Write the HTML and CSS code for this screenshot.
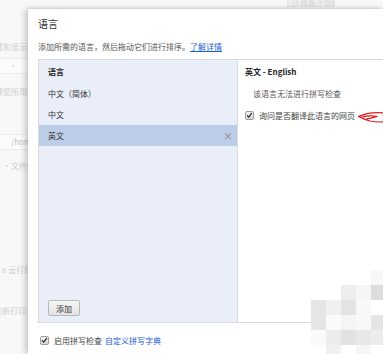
FILE: index.html
```html
<!DOCTYPE html>
<html lang="zh-CN">
<head>
<meta charset="utf-8">
<title>语言</title>
<link rel="stylesheet" href="styles.css">
</head>
<body>
<div class="page">
  <div class="topbar"><span class="ghost-btn">让我基于您的</span></div>
  <div class="main">
    <aside class="bg-col">
      <div class="bg-text t1">置和显示</div>
      <div class="bg-input i1">·</div>
      <div class="bg-text t2">择您所用</div>
      <div class="bg-input i2">/hom</div>
      <div class="bg-text t3">·文件的</div>
      <div class="bg-text t4">e 云打印</div>
      <div class="bg-text t5">|新打印</div>
    </aside>
    <section class="dialog">
      <h1 class="title">语言</h1>
      <p class="subtitle">添加所需的语言，然后拖动它们进行排序。<a class="link underline" href="#">了解详情</a></p>
      <div class="box">
        <div class="lang-list">
          <div class="list-head">语言</div>
          <div class="list-item">中文（简体）</div>
          <div class="list-item">中文</div>
          <div class="list-item selected"><span>英文</span><span class="close">×</span></div>
          <button class="add-btn">添加</button>
        </div>
        <div class="lang-detail">
          <div class="detail-head">英文 - English</div>
          <div class="detail-note">该语言无法进行拼写检查</div>
          <label class="check-row detail-check"><span class="checkbox"><svg viewBox="0 0 9 9" width="9" height="9"><path d="M1.8 4.6 L3.6 6.6 L7.2 1.8" fill="none" stroke="#222" stroke-width="1.5" stroke-linecap="round" stroke-linejoin="round"/></svg></span><span>询问是否翻译此语言的网页</span></label>
        </div>
      </div>
      <label class="check-row bottom-check"><span class="checkbox"><svg viewBox="0 0 9 9" width="9" height="9"><path d="M1.8 4.6 L3.6 6.6 L7.2 1.8" fill="none" stroke="#222" stroke-width="1.5" stroke-linecap="round" stroke-linejoin="round"/></svg></span><span>启用拼写检查</span><a class="link" href="#">自定义拼写字典</a></label>
    </section>
  </div>
  <svg class="red-arrow" viewBox="0 0 27 13" width="27" height="13"><path d="M27 2 Q18 1.2 10 2.6 L1.5 5.4 Q7 8.4 13 10 Q20 11.4 27 10.8 M6 5.6 Q13 4.4 20 5.4 Q15 7.2 10 7.8" fill="none" stroke="#e21b1b" stroke-width="1.2" stroke-linecap="round" stroke-linejoin="round"/></svg>
  <div class="mosaic">
    <i></i><i></i><i></i><i></i><i style="background:#f8f8f8"></i>
    <i></i><i></i><i style="background:#eeeeee"></i><i style="background:#f6f6f6"></i><i style="background:#dddddd"></i>
    <i style="background:#e5e5e5"></i><i style="background:#f0f0f0"></i><i style="background:#e3e3e3"></i><i style="background:#f8f8f8"></i><i style="background:#ffffff"></i>
    <i style="background:#e5e5e5"></i><i style="background:#fafafa"></i><i style="background:#f5f5f5"></i><i style="background:#f8f8f8"></i><i style="background:#e5e5e5"></i>
    <i style="background:#fafafa"></i><i style="background:#ececec"></i><i style="background:#e3e1e1"></i><i style="background:#e8e8e8"></i><i style="background:#ececec"></i>
    <i></i><i style="background:#f0f0f0"></i><i></i><i style="background:#f6f6f6"></i><i></i>
  </div>
</div>
</body>
</html>
```
FILE: styles.css
```css
* { box-sizing: border-box; }
html, body { margin: 0; padding: 0; }
body {
  width: 383px;
  height: 354px;
  overflow: hidden;
  background: #f8f8f8;
  font-family: "Noto Sans CJK SC", "Noto Sans", sans-serif;
  color: #333;
}
.page {
  position: relative;
  width: 383px;
  height: 354px;
  overflow: hidden;
}
.topbar {
  height: 9px;
  padding-left: 287px;
  overflow: hidden;
}
.ghost-btn {
  display: block;
  width: 48px;
  height: 7px;
  background: #eeeeee;
  border: 1px solid #e6e6e6;
  border-top: 0;
  color: #d4d4d4;
  font-size: 8px;
  line-height: 6px;
  padding-left: 4px;
  overflow: hidden;
  white-space: nowrap;
}
.main {
  display: flex;
  height: 345px;
}
.bg-col {
  width: 28px;
  flex: none;
  overflow: hidden;
  color: #cdcdcd;
  font-size: 8px;
  white-space: nowrap;
}
.bg-text { line-height: 12px; text-indent: -5px; }
.t1 { margin-top: 32px; }
.bg-input {
  height: 16px;
  border: 1px solid #ececec;
  background: #fbfbfb;
  line-height: 14px;
  margin-left: -4px;
  padding-left: 12px;
  width: 40px;
}
.i1 { margin-top: 5px; }
.t2 { margin-top: 12px; }
.i2 { margin-top: 36px; padding-left: 14px; color: #c4c4c4; }
.t3 { margin-top: 10px; text-indent: 3px; }
.t4 { margin-top: 92px; text-indent: 2px; }
.t5 { margin-top: 29px; text-indent: 0; }

.dialog {
  flex: 1;
  background: #ffffff;
  padding: 8px 0 0 10px;
  box-shadow: -3px 0 6px rgba(0,0,0,0.18), 0 -1px 3px rgba(0,0,0,0.1);
  min-width: 0;
}
.title {
  margin: 0;
  font-size: 10px;
  line-height: 14px;
  font-weight: normal;
  color: #333;
}
.subtitle {
  margin: 10px 0 0;
  font-size: 8px;
  line-height: 12px;
  color: #555;
  white-space: nowrap;
}
.link { color: #1c5fd6; text-decoration: none; }
.underline { text-decoration: underline; }

.box {
  margin-top: 6px;
  height: 264px;
  width: 360px;
  border: 1px solid #d9d9d9;
  display: flex;
  font-size: 8px;
}
.lang-list {
  width: 199px;
  flex: none;
  background: #e9eef9;
  border-right: 1px solid #d7dae0;
  display: flex;
  flex-direction: column;
}
.list-head {
  height: 23px;
  line-height: 23px;
  padding-left: 9px;
  font-weight: bold;
  color: #222;
}
.list-item {
  height: 21px;
  line-height: 21px;
  padding: 0 4px 0 9px;
  color: #333;
  display: flex;
  justify-content: space-between;
}
.selected { background: #bccde8; }
.close { color: #888; font-size: 10px; }
.add-btn {
  margin: auto 0 6px 9px;
  width: 32px;
  height: 16px;
  padding: 0;
  font: inherit;
  font-size: 8px;
  color: #333;
  background: linear-gradient(#f6f6f6, #e2e2e2);
  border: 1px solid #b9b9b9;
  border-radius: 2px;
}
.lang-detail {
  flex: 1;
  background: #fff;
}
.detail-head {
  height: 23px;
  line-height: 23px;
  padding-left: 7px;
  font-weight: bold;
  color: #222;
}
.detail-note {
  height: 21px;
  line-height: 21px;
  padding-left: 15px;
  color: #555;
}
.check-row {
  display: flex;
  align-items: center;
  gap: 5px;
  font-size: 8px;
  color: #444;
  white-space: nowrap;
}
.detail-check {
  height: 21px;
  margin-top: 1px;
  padding-left: 7px;
}
.checkbox {
  width: 9px;
  height: 9px;
  flex: none;
  border: 1px solid #9d9d9d;
  border-radius: 2px;
  background: linear-gradient(#f4f4f4, #d6d6d6);
  display: flex;
  align-items: center;
  justify-content: center;
}
.checkbox svg { display: block; }
.bottom-check {
  margin-top: 10px;
  height: 14px;
  padding-left: 2px;
}
.bottom-check .link { margin-left: -2px; }

.red-arrow {
  position: absolute;
  left: 357px;
  top: 111px;
}
.mosaic {
  position: absolute;
  left: 311px;
  top: 270px;
  display: grid;
  grid-template-columns: repeat(5, 15px);
  grid-auto-rows: 15px;
}
.mosaic i { display: block; }
```
